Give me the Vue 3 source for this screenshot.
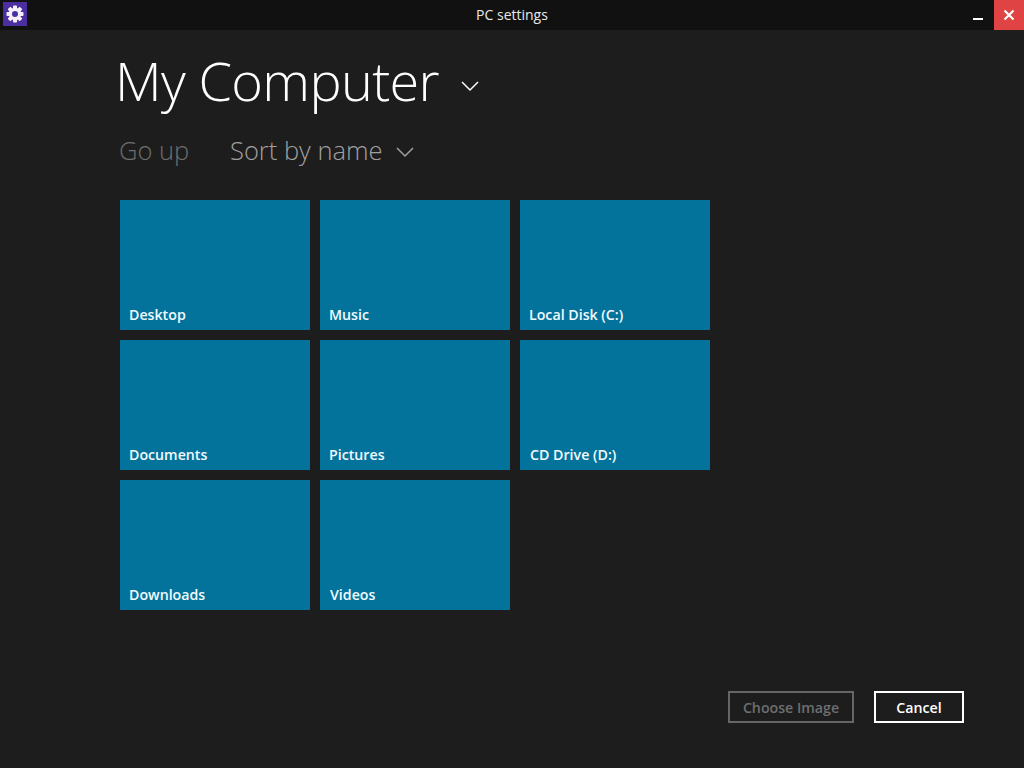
<script setup>
const tiles = [
  { name: 'Desktop' }, { name: 'Music' }, { name: 'Local Disk (C:)' },
  { name: 'Documents' }, { name: 'Pictures' }, { name: 'CD Drive (D:)', nudge: true },
  { name: 'Downloads' }, { name: 'Videos', nudge: true },
]
</script>

<template>
  <div class="window">
    <header class="titlebar">
      <div class="app-icon">
        <svg width="18" height="18" viewBox="0 0 18 18">
          <g fill="#f4f0fa">
            <rect v-for="a in [0,45,90,135]" :key="a" x="7" y="0.5" width="4" height="17" rx="0.8" :transform="`rotate(${a} 9 9)`" />
            <circle cx="9" cy="9" r="6.2" />
          </g>
          <circle cx="9" cy="9" r="3" fill="#4b2fa0" />
        </svg>
      </div>
      <div class="title">PC settings</div>
      <div class="controls">
        <div class="minimize"><span class="min-bar"></span></div>
        <div class="close">
          <svg width="12" height="12" viewBox="0 0 12 12">
            <path d="M1.5 1.5 L10.5 10.5 M10.5 1.5 L1.5 10.5" stroke="#fff" stroke-width="2.2" fill="none" />
          </svg>
        </div>
      </div>
    </header>

    <main class="content">
      <div class="heading">
        <h1>My Computer</h1>
        <svg class="chev" width="20" height="12" viewBox="0 0 20 12">
          <path d="M2 2 L10 10 L18 2" stroke="#fff" stroke-width="1.5" fill="none" />
        </svg>
      </div>
      <div class="toolbar">
        <span class="go-up">Go up</span>
        <span class="sort">Sort by name</span>
        <svg class="chev2" width="20" height="12" viewBox="0 0 20 12">
          <path d="M2 2 L10 10 L18 2" stroke="#a0a0a0" stroke-width="1.5" fill="none" />
        </svg>
      </div>
      <div class="tiles">
        <div v-for="t in tiles" :key="t.name" class="tile" :class="{ nudge: t.nudge }">{{ t.name }}</div>
      </div>
    </main>

    <footer class="actions">
      <button class="btn disabled">Choose Image</button>
      <button class="btn">Cancel</button>
    </footer>
  </div>
</template>

<style>
html, body { margin: 0; background: #1d1d1d; }
</style>

<style scoped>
.window {
  width: 1024px;
  height: 768px;
  background: #1d1d1d;
  color: #fff;
  font-family: "Open Sans", "Noto Sans", sans-serif;
  display: flex;
  flex-direction: column;
  overflow: hidden;
}
.titlebar {
  height: 30px;
  flex: none;
  background: #111;
  display: flex;
  align-items: center;
  position: relative;
}
.app-icon {
  width: 24px;
  height: 24px;
  margin: 0 0 2px 3px;
  background: #4b2fa0;
  display: flex;
  align-items: center;
  justify-content: center;
}
.title {
  position: absolute;
  left: 0;
  right: 0;
  top: 0;
  line-height: 30px;
  text-align: center;
  font-size: 14px;
  color: #e8e8e8;
}
.controls {
  margin-left: auto;
  display: flex;
  height: 30px;
  position: relative;
}
.minimize {
  width: 30px;
  display: flex;
  justify-content: center;
  padding: 18px 2px 0 0;
  box-sizing: border-box;
}
.min-bar {
  width: 10px;
  height: 2px;
  background: #fff;
}
.close {
  width: 30px;
  background: #e04343;
  display: flex;
  align-items: center;
  justify-content: center;
}
.content {
  flex: 1;
  padding-left: 120px;
}
.heading {
  display: flex;
  align-items: center;
  height: 100px;
  margin-left: -5px;
}
h1 {
  margin: 0;
  font-size: 54px;
  font-weight: 300;
  line-height: 100px;
  color: #fff;
  letter-spacing: -0.65px;
}
.chev { margin: 12px 0 0 21px; }
.toolbar {
  display: flex;
  align-items: center;
  height: 42px;
  font-size: 25.5px;
  font-weight: 300;
  margin: -1px 0 29px -1px;
}
.go-up { color: #6e6e6e; width: 111px; }
.sort { color: #a0a0a0; }
.chev2 { margin: 4px 0 0 12px; }
.tiles {
  display: grid;
  grid-template-columns: repeat(3, 190px);
  grid-auto-rows: 130px;
  gap: 10px;
}
.tile {
  background: #04739b;
  font-size: 14.2px;
  font-weight: 600;
  color: #f2fbff;
  display: flex;
  align-items: flex-end;
  padding: 0 0 6px 9px;
  box-sizing: border-box;
}
.tile.nudge { padding-left: 10px; }
.actions {
  position: absolute;
  left: 728px;
  top: 691px;
  display: flex;
  gap: 20px;
}
.btn {
  width: 126px;
  height: 32px;
  background: transparent;
  border: 2px solid #fff;
  color: #fff;
  font: 600 14.2px "Open Sans", "Noto Sans", sans-serif;
  padding: 0;
  box-sizing: border-box;
}
.btn:last-child { width: 90px; }
.btn.disabled {
  border-color: #666;
  color: #6e6e6e;
}
</style>
